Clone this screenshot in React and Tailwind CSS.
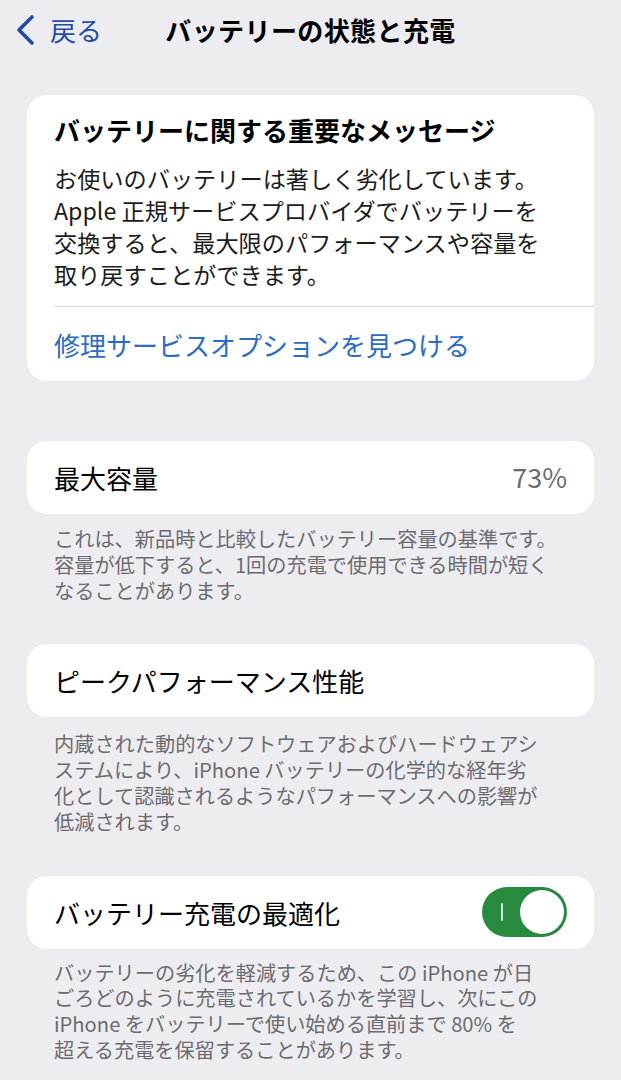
import React from "react";

const Footer = ({ lines, className = "" }) => (
  <p className={`px-[54px] text-[20.2px] leading-[25.8px] text-[#6c6c70] ${className}`}>
    {lines.map((l, i) => (
      <span key={i} className="block whitespace-nowrap">
        {l}
      </span>
    ))}
  </p>
);

const Row = ({ children, className = "" }) => (
  <div
    className={`mx-[27px] h-[73px] rounded-[20px] bg-white px-[27px] flex items-center justify-between ${className}`}
  >
    {children}
  </div>
);

export default function App() {
  return (
    <div
      className="min-h-[1080px] w-[621px] bg-[#ececf1] text-black overflow-hidden"
      style={{ fontFamily: '"Noto Sans CJK JP", "Noto Sans", sans-serif' }}
    >
      {/* nav bar */}
      <header className="grid h-[60px] grid-cols-[1fr_auto_1fr] items-center">
        <div className="flex items-center gap-[13px] pl-[15px] text-[#1f4ba9]">
          <svg width="22" height="32" viewBox="0 0 22 32" fill="none">
            <path
              d="M17 3 L4 16 L17 29"
              stroke="currentColor"
              strokeWidth="3.6"
              strokeLinecap="round"
              strokeLinejoin="round"
            />
          </svg>
          <span className="text-[26px] leading-none">戻る</span>
        </div>
        <h1 className="text-[26px] font-bold leading-none tracking-[0.4px]">
          バッテリーの状態と充電
        </h1>
        <div />
      </header>

      {/* important message */}
      <section className="mx-[27px] mt-[35px] rounded-[20px] bg-white">
        <div className="px-[27px] pt-[19px] pb-[16px]">
          <h2 className="text-[26px] font-bold leading-[32px]">
            バッテリーに関する重要なメッセージ
          </h2>
          <p className="mt-[16px] text-[23.2px] leading-[32px] text-[#1c1c1e]">
            <span className="block whitespace-nowrap">お使いのバッテリーは著しく劣化しています。</span>
            <span className="block whitespace-nowrap">Apple 正規サービスプロバイダでバッテリーを</span>
            <span className="block whitespace-nowrap">交換すると、最大限のパフォーマンスや容量を</span>
            <span className="block whitespace-nowrap">取り戻すことができます。</span>
          </p>
        </div>
        <div className="ml-[27px] border-t border-[#dcdce0]" />
        <div className="flex h-[74px] items-center px-[27px] text-[26px] text-[#2a6cc4]">
          修理サービスオプションを見つける
        </div>
      </section>

      {/* max capacity */}
      <Row className="mt-[60px]">
        <span className="text-[26px]">最大容量</span>
        <span className="text-[27px] text-[#6c6c70]">73%</span>
      </Row>
      <Footer
        className="mt-[12px]"
        lines={[
          "これは、新品時と比較したバッテリー容量の基準です。",
          "容量が低下すると、1回の充電で使用できる時間が短く",
          "なることがあります。",
        ]}
      />

      {/* peak performance */}
      <Row className="mt-[41px]">
        <span className="text-[26px]">ピークパフォーマンス性能</span>
      </Row>
      <Footer
        className="mt-[14px]"
        lines={[
          "内蔵された動的なソフトウェアおよびハードウェアシ",
          "ステムにより、iPhone バッテリーの化学的な経年劣",
          "化として認識されるようなパフォーマンスへの影響が",
          "低減されます。",
        ]}
      />

      {/* optimized charging */}
      <Row className="mt-[41px]">
        <span className="text-[26px]">バッテリー充電の最適化</span>
        <div className="relative h-[50px] w-[85px] rounded-full bg-[#268a3f]">
          <span className="absolute left-[19px] top-[16px] h-[18px] w-[2px] rounded bg-[#cfe8d4]" />
          <span className="absolute right-[3px] top-[3px] h-[44px] w-[44px] rounded-full bg-white" />
        </div>
      </Row>
      <Footer
        className="mt-[11px]"
        lines={[
          "バッテリーの劣化を軽減するため、この iPhone が日",
          "ごろどのように充電されているかを学習し、次にこの",
          "iPhone をバッテリーで使い始める直前まで 80% を",
          "超える充電を保留することがあります。",
        ]}
      />
    </div>
  );
}
